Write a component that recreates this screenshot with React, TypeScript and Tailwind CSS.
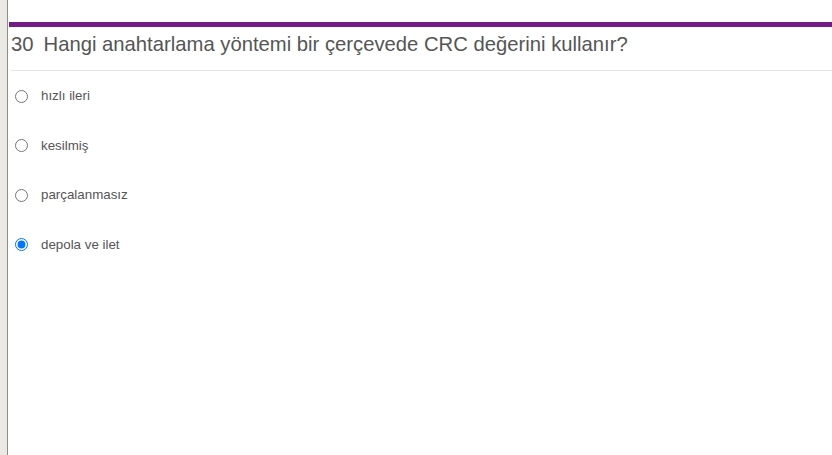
import React, { useState } from "react"

const options = ["hızlı ileri", "kesilmiş", "parçalanmasız", "depola ve ilet"]

const App = () => {
  const [selected, setSelected] = useState(3)

  return (
    <div
      className="w-[832px] h-[455px] flex flex-row bg-white overflow-hidden"
      style={{ fontFamily: '"Liberation Sans", Arial, sans-serif' }}
    >
      <div className="w-[8px] h-full bg-[#ebe9e4] border-r border-[#8c8c88]" />
      <div className="flex-1 flex flex-col pt-[22px] pl-px">
        <div className="h-[5px] bg-[#741b84]" />
        <div className="flex flex-row items-center h-[33px] pl-[2px] text-[20.25px] text-[#555555] leading-none pt-px">
          <span>30</span>
          <span className="ml-[10px]">Hangi anahtarlama yöntemi bir çerçevede CRC değerini kullanır?</span>
        </div>
        <div className="ml-[2px] mt-[10px] h-px bg-[#e6e6e6]" />
        <div className="flex flex-col gap-[29.5px] pt-[15px] pl-[6px]">
          {options.map((opt, i) => (
            <label key={opt} className="flex flex-row items-center h-[20px] cursor-pointer">
              <input
                type="radio"
                name="q30"
                checked={selected === i}
                onChange={() => setSelected(i)}
                className="m-0 w-[13px] h-[13px]"
              />
              <span className="ml-[13px] text-[13.33px] text-[#555555]">{opt}</span>
            </label>
          ))}
        </div>
      </div>
    </div>
  )
}

export default App
